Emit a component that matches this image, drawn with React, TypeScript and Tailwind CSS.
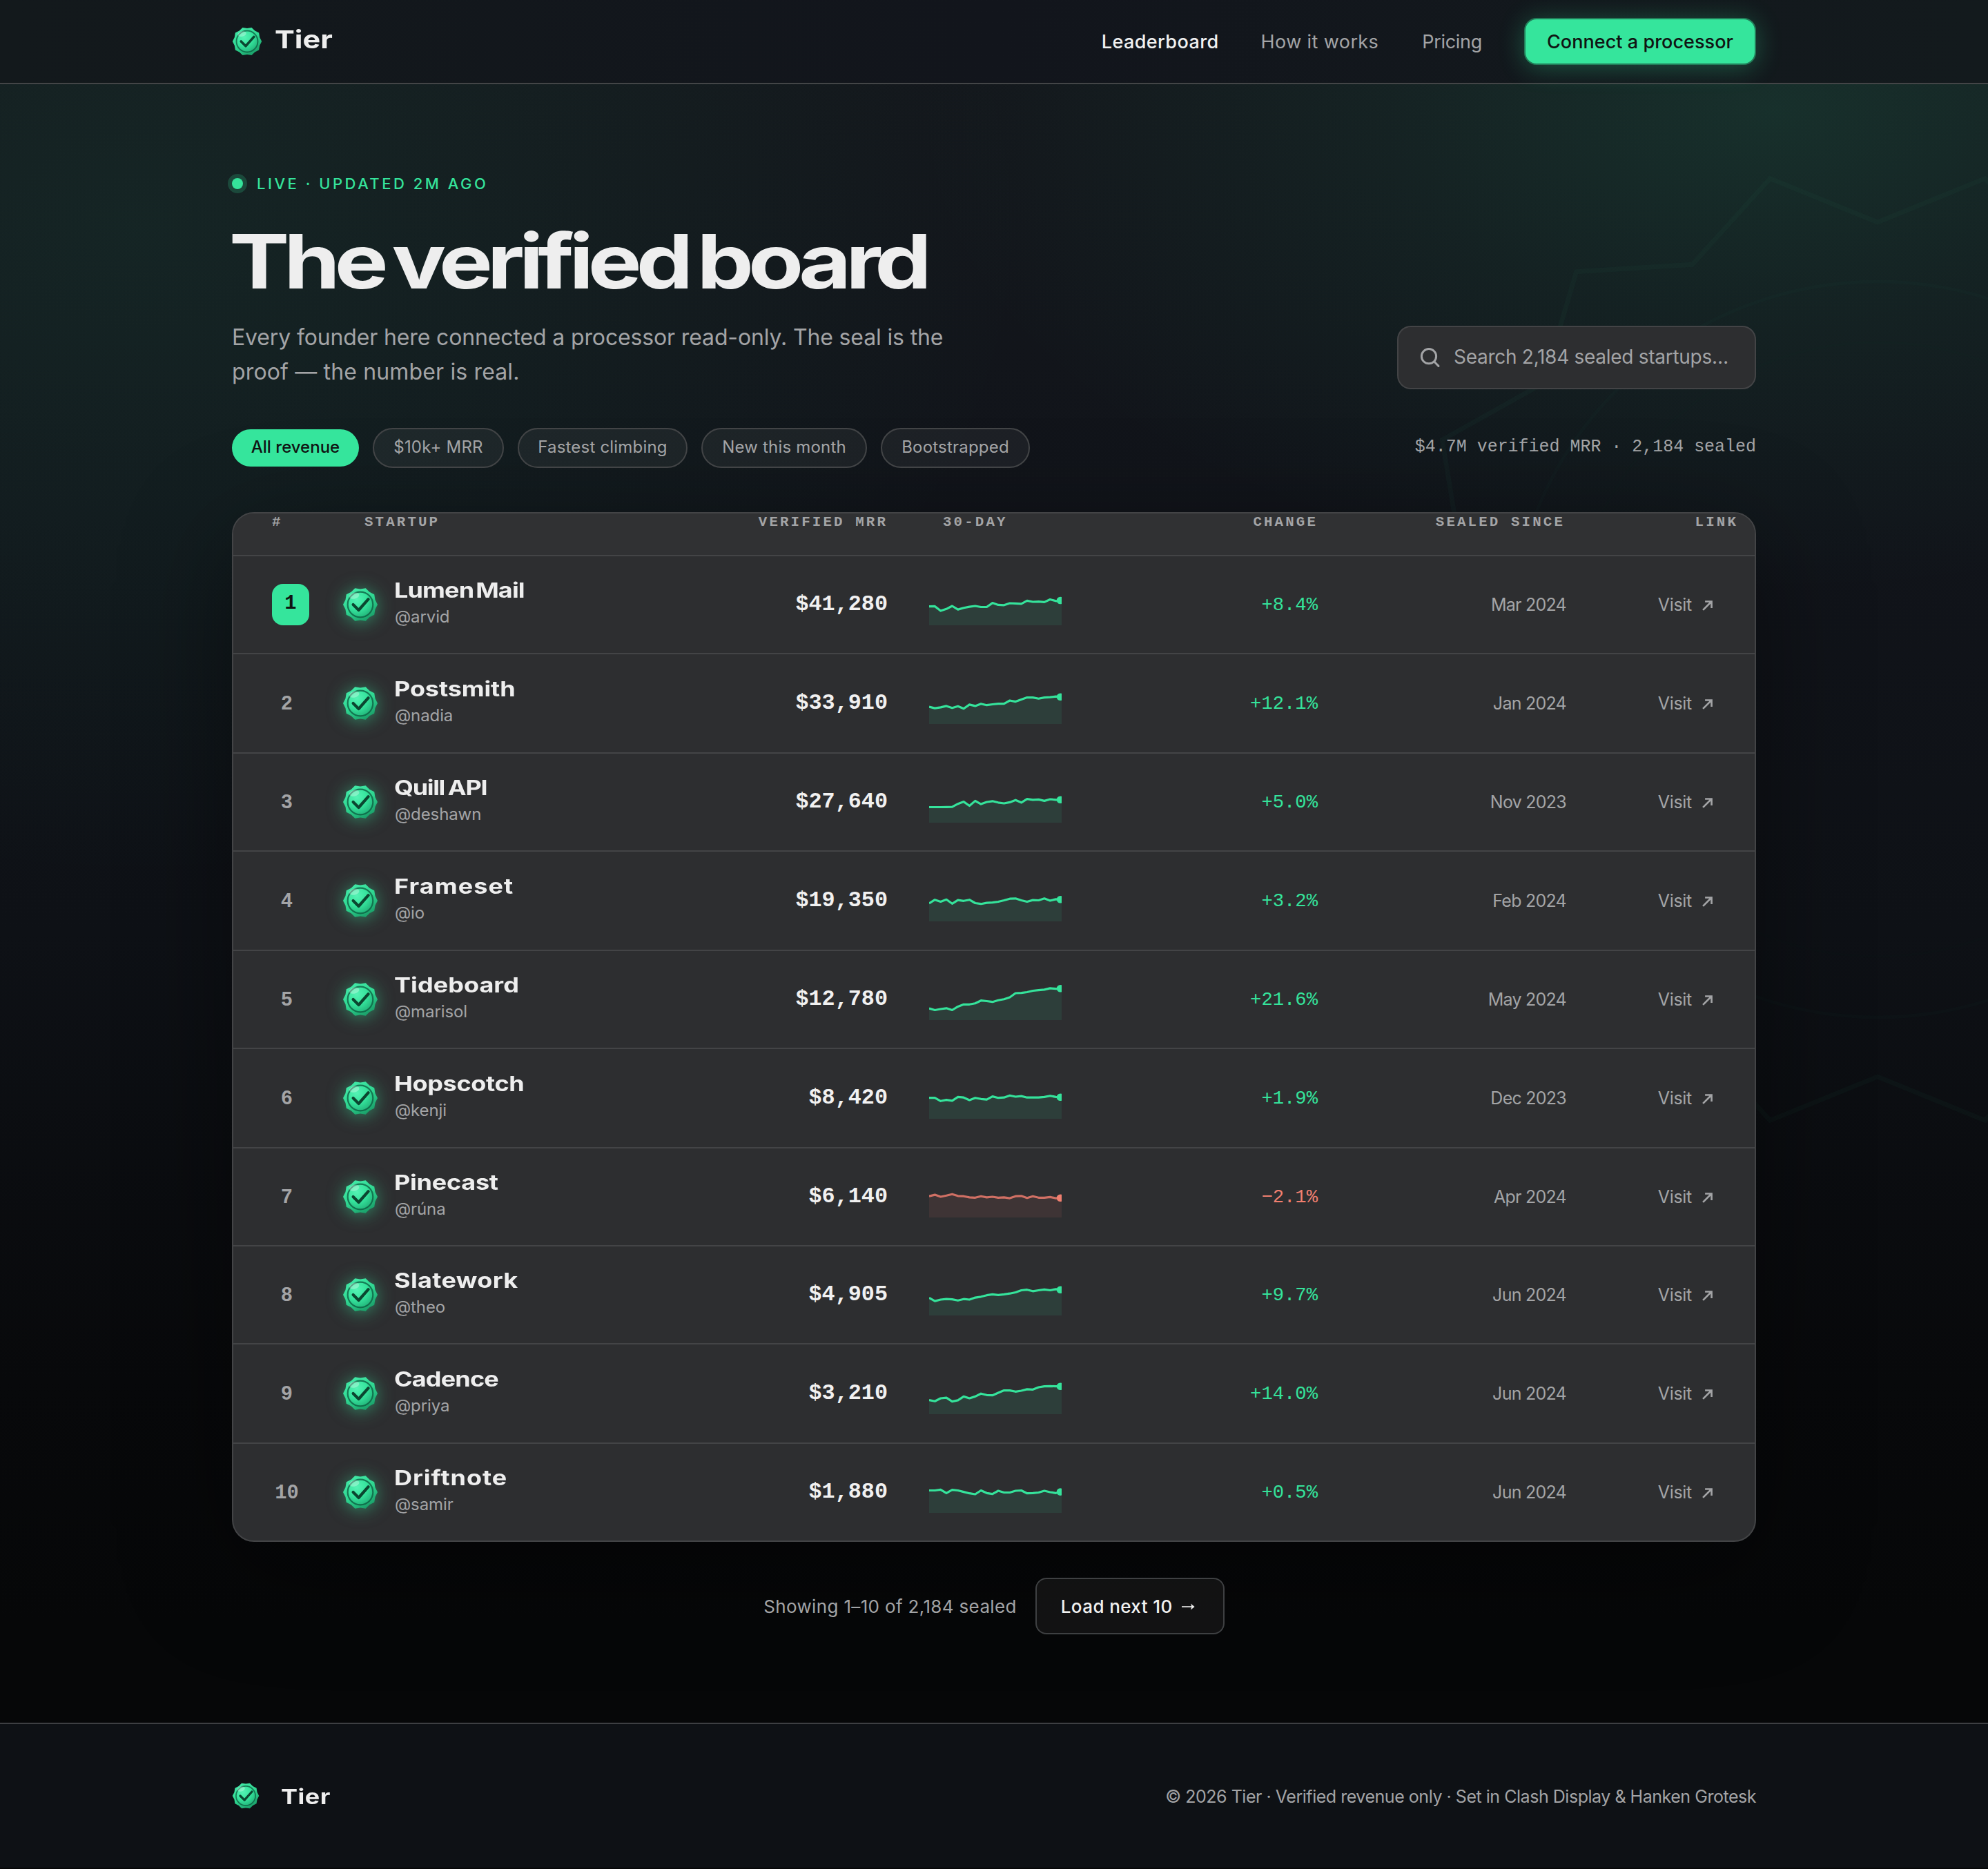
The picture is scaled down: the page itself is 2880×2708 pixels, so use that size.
type Row = {
  name: string;
  tracking: string;
  handle: string;
  mrr: string;
  change: string;
  since: string;
  height: string;
  points: number[];
};

const rows: Row[] = [
  { name: "Lumen Mail", tracking: "tracking-[-0.7px] [word-spacing:-4px]", handle: "@arvid", mrr: "$41,280", change: "+8.4%", since: "Mar 2024", height: "h-[142px]",
    points: [32.7, 32.4, 39.1, 36.3, 32, 37.1, 34.7, 33.1, 32, 33.5, 33.5, 27.6, 30.4, 30.8, 28, 28.4, 28.8, 24.4, 26, 25.6, 26.4, 22.5, 24.8, 24] },
  { name: "Postsmith", tracking: "tracking-[-0.1px]", handle: "@nadia", mrr: "$33,910", change: "+12.1%", since: "Jan 2024", height: "h-[144px]",
    points: [35.1, 37.1, 35.9, 33.9, 36.7, 34.3, 37.8, 31.9, 33.9, 30.7, 32.7, 31.5, 30.7, 30.7, 26, 27.6, 24.4, 21.6, 21.6, 23.2, 21.6, 21.2, 20.1, 20.8] },
  { name: "Quill API", tracking: "tracking-[-1.1px] [word-spacing:-2px]", handle: "@deshawn", mrr: "$27,640", change: "+5.0%", since: "Nov 2023", height: "h-[142px]",
    points: [37.5, 37.5, 37.5, 37.3, 37.1, 32.7, 29.6, 35.5, 28.4, 33.1, 30, 28.8, 30.8, 32, 30.4, 27.2, 30.8, 25.6, 26.8, 26.4, 28.4, 26, 26.8, 26.8] },
  { name: "Frameset", tracking: "tracking-[0.9px]", handle: "@io", mrr: "$19,350", change: "+3.2%", since: "Feb 2024", height: "h-[144px]",
    points: [33.9, 28.7, 31.5, 28.3, 34.3, 29.1, 30.3, 28.7, 33.5, 34.7, 33.1, 32.7, 31.5, 29.5, 27.2, 26.8, 29.5, 31.5, 29.1, 29.5, 26.8, 29.9, 27.9, 28.3] },
  { name: "Tideboard", tracking: "tracking-[0.05px]", handle: "@marisol", mrr: "$12,780", change: "+21.6%", since: "May 2024", height: "h-[142px]",
    points: [43, 45.5, 44, 42.8, 45.5, 40.4, 37.3, 37.3, 35.7, 31.7, 32.5, 33.7, 31.3, 29.7, 27, 21, 20.7, 19.5, 17.5, 16.7, 15.9, 13.9, 14.7, 14.3] },
  { name: "Hopscotch", tracking: "tracking-[-0.3px]", handle: "@kenji", mrr: "$8,420", change: "+1.9%", since: "Dec 2023", height: "h-[144px]",
    points: [29.7, 29.7, 34.3, 32.6, 33.9, 28.4, 29.2, 33, 29.7, 31.3, 32.2, 27.6, 29.7, 29.2, 26.3, 28, 27.1, 29.2, 29.2, 29.2, 28.4, 26.7, 28.4, 28.8] },
  { name: "Pinecast", tracking: "tracking-[-0.2px]", handle: "@rúna", mrr: "$6,140", change: "−2.1%", since: "Apr 2024", height: "h-[142px]",
    points: [29.2, 27.1, 30, 28.3, 26.2, 28.8, 29.2, 30.9, 31.3, 29.2, 30.9, 30, 31.3, 30.9, 32.1, 29.2, 28.8, 31.7, 29.2, 31.3, 31.3, 30.4, 32.1, 31.7] },
  { name: "Slatework", tracking: "tracking-[0.3px]", handle: "@theo", mrr: "$4,905", change: "+9.7%", since: "Jun 2024", height: "h-[142px]",
    points: [34.5, 39.1, 37, 36.2, 36.6, 38.3, 36.2, 37, 34.1, 32.8, 30.7, 29.4, 30.3, 29.4, 28.2, 26.5, 23.5, 22.7, 24.8, 23.5, 22.3, 23.5, 21.9, 22.7] },
  { name: "Cadence", tracking: "tracking-[-0.7px]", handle: "@priya", mrr: "$3,210", change: "+14.0%", since: "Jun 2024", height: "h-[144px]",
    points: [39.5, 41.2, 37, 36.1, 41.6, 39.9, 34.4, 37, 34.4, 30.2, 32.3, 32.7, 29, 25.6, 25.6, 27.3, 26, 23.9, 24.3, 21, 19.7, 19.3, 19.7, 19.7] },
  { name: "Driftnote", tracking: "tracking-[0.8px]", handle: "@samir", mrr: "$1,880", change: "+0.5%", since: "Jun 2024", height: "h-[140px]",
    points: [27.5, 27.5, 26.3, 31.3, 26.7, 27.5, 29.6, 31.7, 33, 27.5, 31.3, 32.6, 28, 30.5, 30.5, 28, 27.5, 31.7, 31.3, 30.5, 28, 30, 31.3, 29.6] },
];

const cols = "grid grid-cols-[158px_500px_291px_251px_373px_358px_273px]";

/** Points of a scalloped seal: `n` tips, notches at `inner` between them. */
function sealPoints(cx: number, cy: number, outer: number, inner: number, n: number) {
  return Array.from({ length: n * 2 }, (_, i) => {
    const a = Math.PI / 2 + (i * Math.PI) / n;
    const r = i % 2 === 0 ? inner : outer;
    return `${(cx + r * Math.cos(a)).toFixed(2)},${(cy - r * Math.sin(a)).toFixed(2)}`;
  }).join(" ");
}

const smallSeal = sealPoints(26, 26, 25, 22.6, 10);
const largeSeal = sealPoints(720, 721, 700, 619, 14);

function Seal({ className }: { className: string }) {
  return (
    <svg viewBox="0 0 52 52" className={className}>
      <defs>
        <linearGradient id="seal-rim" x1="0.2" y1="0" x2="0.8" y2="1">
          <stop offset="0" stopColor="#43eba9" />
          <stop offset="0.5" stopColor="#2fd590" />
          <stop offset="1" stopColor="#179763" />
        </linearGradient>
        <radialGradient id="seal-face" cx="0.36" cy="0.3" r="0.8">
          <stop offset="0" stopColor="#55f2b4" />
          <stop offset="0.5" stopColor="#36e49d" />
          <stop offset="1" stopColor="#1fae75" />
        </radialGradient>
      </defs>
      <polygon points={smallSeal} fill="url(#seal-rim)" />
      <circle cx="26" cy="26" r="18.3" fill="url(#seal-face)" stroke="#0b5a3d" strokeOpacity="0.75" strokeWidth="2.2" />
      <ellipse cx="17.2" cy="13.2" rx="7.4" ry="4.4" fill="#fff" fillOpacity="0.3" transform="rotate(-14 17.2 13.2)" />
      <path d="M15.6 26 L23.6 34 L37.6 18.2" fill="none" stroke="#0b4630" strokeWidth="4.2" strokeLinecap="round" strokeLinejoin="round" />
    </svg>
  );
}

function Sparkline({ points, down }: { points: number[]; down: boolean }) {
  const step = 192 / (points.length - 1);
  const line = points.map((y, i) => `${(i * step).toFixed(2)},${y}`).join(" ");
  const last = points[points.length - 1];
  return (
    <svg viewBox="0 0 192 60" className="h-[60px] w-[192px] overflow-hidden">
      <polygon points={`0,60 ${line} 192,60`} fill={down ? "#f07f6f" : "#35e39b"} fillOpacity={down ? 0.09 : 0.095} />
      <polyline points={line} fill="none" stroke={down ? "#d07064" : "#35e39b"} strokeWidth="3.2" strokeLinejoin="round" />
      <circle cx="190" cy={last} r="5.3" fill={down ? "#f07f6f" : "#35e39b"} />
    </svg>
  );
}

const chips = [
  { label: "$10k+ MRR", className: "w-[190px]" },
  { label: "Fastest climbing", className: "w-[246px]" },
  { label: "New this month", className: "w-[240px]" },
  { label: "Bootstrapped", className: "w-[216px]" },
];

export default function App() {
  return (
    <div className="relative isolate h-[2708px] w-[2880px] overflow-hidden bg-[#050607] bg-[radial-gradient(ellipse_1250px_700px_at_2570px_160px,rgba(52,227,155,0.125),rgba(52,227,155,0.06)_45%,rgba(52,227,155,0)),radial-gradient(ellipse_1300px_950px_at_200px_330px,rgba(52,227,155,0.075),rgba(52,227,155,0.04)_50%,rgba(52,227,155,0)),linear-gradient(180deg,#14171c_0px,#11141a_750px,#0e1116_1350px,#08090b_2000px,#060708_2350px)] font-['Inter',sans-serif] text-[#a3a4a6]">
      <svg viewBox="0 0 1440 1442" className="absolute left-[2000px] top-[220px] -z-10 h-[1442px] w-[1440px]">
        <g fill="none" stroke="#35e39b">
          <polygon points={largeSeal} strokeWidth="7" strokeOpacity="0.03" />
          <circle cx="720" cy="721" r="533" strokeWidth="5" strokeOpacity="0.02" />
          <circle cx="720" cy="721" r="445" strokeWidth="4" strokeOpacity="0.008" />
        </g>
      </svg>

      <header className="flex h-[122px] items-center justify-between border-b-2 border-[#434547] bg-gradient-to-r from-[#13191c] via-[#12151c] to-[#131a1d] px-[336px]">
        <div className="flex items-center gap-[18px]">
          <Seal className="size-[44px]" />
          <span className="origin-left scale-x-[1.2] pb-[6px] text-[36px] font-bold text-[#eeeeee]">Tier</span>
        </div>
        <nav className="flex items-center text-[27px] whitespace-nowrap">
          <a className="mr-[61px] pt-[2px] font-[450] tracking-[0.4px] text-[#f1f1f1]">Leaderboard</a>
          <a className="mr-[63px] pt-[2px] tracking-[0.4px]">How it works</a>
          <a className="mr-[61px] pt-[2px] tracking-[-0.3px]">Pricing</a>
          <a className="flex h-[68px] w-[336px] items-center justify-center rounded-[18px] border-2 border-[#227c58] bg-[#35e59c] pt-[2px] font-medium tracking-[0.05px] text-[#101413] shadow-[0_4px_36px_rgba(53,229,156,0.3)]">Connect a processor</a>
        </nav>
      </header>

      <main className="px-[336px] pt-[126px]">
        <div className="flex items-end justify-between">
          <div>
            <div className="flex h-[36px] items-center gap-[20px] text-[22px] font-medium tracking-[3.5px] text-[#35e39b]">
              <span className="size-[16px] rounded-full bg-[#35e39b] shadow-[0_0_0_6px_rgba(53,227,155,0.2)]" />
              LIVE · UPDATED 2M AGO
            </div>
            <h1 className="mt-[38px] -ml-[4px] origin-left scale-x-[1.2] text-[109px] leading-[112px] font-bold tracking-[-6.7px] [word-spacing:-8px] whitespace-nowrap text-[#eeeeee]">The verified board</h1>
            <p className="mt-[30px] text-[32px] leading-[50px] whitespace-nowrap">
              <span className="block tracking-[-0.14px]">Every founder here connected a processor read-only. The seal is the</span>
              <span className="block tracking-[0.15px]">proof — the number is real.</span>
            </p>
          </div>
          <div className="flex h-[92px] w-[520px] items-center rounded-[20px] border-2 border-[#434446] bg-[#2d2e30] pb-[2px] pl-[31px] text-[28px] tracking-[-0.28px] whitespace-nowrap">
            <svg viewBox="0 0 30 30" className="mt-[2px] mr-[19px] size-[30px]">
              <g fill="none" stroke="#a3a4a6" strokeWidth="3" strokeLinecap="round">
                <circle cx="13" cy="13.2" r="10.6" />
                <path d="M20.8 21 L27 27.4" />
              </g>
            </svg>
            Search 2,184 sealed startups…
          </div>
        </div>

        <div className="mt-[56px] flex h-[58px] items-center justify-between">
          <div className="flex items-center gap-[20px] text-[24px] tracking-[0.2px] whitespace-nowrap">
            <span className="flex h-[54px] w-[184px] items-center justify-center rounded-full bg-[#35e59c] pb-[3px] font-medium tracking-normal text-[#101413]">All revenue</span>
            {chips.map((c) => (
              <span key={c.label} className={`flex h-[58px] items-center justify-center rounded-full border-2 border-[#424446] bg-white/5 pb-[3px] ${c.className}`}>{c.label}</span>
            ))}
          </div>
          <span className="pb-[3px] font-['Liberation_Mono',monospace] text-[24.96px]">$4.7M verified MRR · 2,184 sealed</span>
        </div>

        <section className="mt-[64px] overflow-hidden rounded-[32px] border-2 border-[#434446] bg-[#2d2e30] shadow-[0_40px_160px_rgba(0,0,0,0.42)]">
          <div className={`${cols} h-[62px] border-b-2 border-[#434446] bg-[#303133] font-['Liberation_Mono',monospace] text-[20.8px] leading-[26px] font-bold tracking-[3.12px]`}>
            <span className="pl-[56px]">#</span>
            <span className="pl-[32px]">STARTUP</span>
            <span className="pr-[1px] text-right">VERIFIED MRR</span>
            <span className="pl-[79px]">30-DAY</span>
            <span className="pr-[2px] text-right">CHANGE</span>
            <span className="pr-[2px] text-right">SEALED SINCE</span>
            <span className="pr-[24px] text-right">LINK</span>
          </div>
          {rows.map((r, i) => {
            const down = r.change.startsWith("−");
            return (
              <div key={r.name} className={`${cols} ${r.height} items-center ${i < rows.length - 1 ? "border-b-2 border-[#434446]" : ""}`}>
                <div className="pl-[56px] font-['Liberation_Mono',monospace] text-[28.8px] font-bold">
                  {i === 0 ? (
                    <span className="flex h-[60px] w-[54px] items-center justify-center rounded-[16px] bg-[#35e59c] pb-[3px] text-[#101413]">1</span>
                  ) : (
                    <span className="flex h-[60px] w-[43px] items-center justify-center pt-[3px]">{i + 1}</span>
                  )}
                </div>
                <div className="flex items-center gap-[24px]">
                  <Seal className="size-[52px] drop-shadow-[0_2px_12px_rgba(53,229,156,0.5)]" />
                  <div className="pb-[5px] whitespace-nowrap">
                    <div className={`-ml-[1px] origin-left scale-x-[1.2] text-[30px] leading-[39px] font-bold text-[#eeeeee] ${r.tracking}`}>{r.name}</div>
                    <div className="pt-[1px] text-[24px] leading-[36px] tracking-[-0.1px]">{r.handle}</div>
                  </div>
                </div>
                <div className="pt-[1px] pr-[1px] text-right font-['Liberation_Mono',monospace] text-[31.8px] font-bold text-[#f1f1f1]">{r.mrr}</div>
                <div className="flex pl-[59px]">
                  <Sparkline points={r.points} down={down} />
                </div>
                <div className={`pt-[2px] pr-[2px] text-right font-['Liberation_Mono',monospace] text-[27.2px] ${down ? "text-[#f07f6f]" : "text-[#35e39b]"}`}>{r.change}</div>
                <div className="pt-[2px] text-right text-[25px] tracking-[-0.75px]">{r.since}</div>
                <div className="flex items-center justify-end gap-[14px] pt-[2px] pr-[60px] text-[25px] tracking-[-0.3px]">
                  Visit
                  <svg viewBox="0 0 18 18" className="size-[17px]">
                    <path d="M2.2 15.8 L14.8 3.2 M5.4 2.6 H15.4 V12.6" fill="none" stroke="#a3a4a6" strokeWidth="2.8" />
                  </svg>
                </div>
              </div>
            );
          })}
        </section>

        <div className="mt-[52px] flex h-[82px] items-center justify-center gap-[27px] text-[26px] whitespace-nowrap">
          <span className="tracking-[0.35px]">Showing 1–10 of 2,184 sealed</span>
          <span className="flex h-[82px] w-[274px] items-center rounded-[16px] border-2 border-[#3e4042] bg-white/5 pl-[35px] font-medium tracking-[0.4px] text-[#f1f1f1]">
            Load next 10
            <svg viewBox="0 0 20 12" className="ml-[13px] mt-[2px] h-[12px] w-[20px]">
              <path d="M0 6 H15" stroke="#f1f1f1" strokeWidth="1.6" />
              <path d="M13 1.6 L18.6 6 L13 10.4 L14.4 6 Z" fill="#f1f1f1" />
            </svg>
          </span>
        </div>
      </main>

      <footer className="mt-[128px] flex h-[210px] items-center justify-between border-t-2 border-[#3d3f42] bg-[#0e1115] px-[336px]">
        <div className="flex items-center gap-[31px]">
          <Seal className="size-[40px]" />
          <span className="origin-left scale-x-[1.2] pt-[2px] text-[30px] font-bold tracking-[0.4px] text-[#eeeeee]">Tier</span>
        </div>
        <span className="pt-[3px] text-[25px] tracking-[-0.47px] whitespace-nowrap">© 2026 Tier · Verified revenue only · Set in Clash Display &amp; Hanken Grotesk</span>
      </footer>
    </div>
  );
}
